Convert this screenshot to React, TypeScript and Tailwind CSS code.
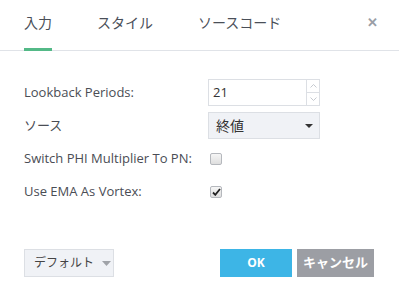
import React from "react";

export default function App() {
  const font = { fontFamily: '"Open Sans", "Noto Sans CJK JP", sans-serif' };
  return (
    <div className="w-[399px] h-[299px] bg-white text-[#4a4d55] overflow-hidden" style={font}>
      <div className="relative h-[51px] border-b border-[#e0e3e8] flex items-end pl-6">
        <div className="flex gap-[45px] text-[14px] leading-none">
          <div className="pb-[17px] border-b-[3px] border-[#53b987] -mb-px text-[#4a4f58]">入力</div>
          <div className="pb-[20px] text-[#4a4f58]">スタイル</div>
          <div className="pb-[20px] text-[#4a4f58]">ソースコード</div>
        </div>
        <div className="absolute right-[21px] top-[16px] text-[#9a9ea6] text-[13px] font-bold leading-none">✕</div>
      </div>
      <div className="pl-6 pt-[28px] text-[13px]">
        <div className="flex items-center h-[27px]">
          <div className="w-[184px]">Lookback Periods:</div>
          <div className="w-[112px] h-[27px] border border-[#dcdfe4] flex">
            <div className="flex-1 pl-[4px] flex items-center text-[13px] text-[#333]">21</div>
            <div className="w-[13px] border-l border-[#dcdfe4] flex flex-col">
              <div className="flex-1 flex items-center justify-center border-b border-[#dcdfe4]">
                <svg width="7" height="4" viewBox="0 0 7 4"><path d="M0.5 3.5L3.5 0.5L6.5 3.5" fill="none" stroke="#b8bcc4" strokeWidth="0.8" /></svg>
              </div>
              <div className="flex-1 flex items-center justify-center">
                <svg width="7" height="4" viewBox="0 0 7 4"><path d="M0.5 0.5L3.5 3.5L6.5 0.5" fill="none" stroke="#b8bcc4" strokeWidth="0.8" /></svg>
              </div>
            </div>
          </div>
        </div>
        <div className="flex items-center h-[27px] mt-[6px]">
          <div className="w-[184px]">ソース</div>
          <div className="w-[112px] h-[27px] border border-[#dcdfe4] bg-[#f0f2f6] flex items-center justify-between pl-[7px] pr-[6px]">
            <span className="text-[14px] text-[#333]">終値</span>
            <svg width="8" height="4" viewBox="0 0 8 4"><path d="M0 0H8L4 4Z" fill="#333" /></svg>
          </div>
        </div>
        <div className="flex items-center h-[24px] mt-[8px]">
          <div className="w-[186px] whitespace-nowrap">Switch PHI Multiplier To PN:</div>
          <div className="w-[12px] h-[12px] rounded-[2px] border border-[#b5b8bd] bg-gradient-to-b from-[#f6f6f6] to-[#dedede]" />
        </div>
        <div className="flex items-center h-[24px] mt-[9px]">
          <div className="w-[186px] whitespace-nowrap">Use EMA As Vortex:</div>
          <div className="w-[12px] h-[12px] rounded-[2px] border border-[#b5b8bd] bg-gradient-to-b from-[#f6f6f6] to-[#dedede] flex items-center justify-center">
            <svg width="9" height="8" viewBox="0 0 9 8"><path d="M1 4.5L3.3 6.8L8 1" fill="none" stroke="#222" strokeWidth="1.8" /></svg>
          </div>
        </div>
      </div>
      <div className="flex items-center justify-between pl-6 pr-[25px] mt-[45px]">
        <div className="w-[90px] h-[28px] border border-[#dcdfe4] bg-[#f0f2f6] flex items-center pl-[9px] gap-[8px] text-[12px] text-[#444] whitespace-nowrap">
          <span>デフォルト</span>
          <svg width="9" height="5" viewBox="0 0 9 5"><path d="M0 0H9L4.5 5Z" fill="#a0a3a8" /></svg>
        </div>
        <div className="flex gap-[5px]">
          <div className="w-[72px] h-[28px] bg-[#3db5e6] text-white font-bold text-[12px] flex items-center justify-center">OK</div>
          <div className="w-[77px] h-[28px] bg-[#9c9ea4] text-white font-bold text-[13px] flex items-center justify-center whitespace-nowrap">キャンセル</div>
        </div>
      </div>
    </div>
  );
}
